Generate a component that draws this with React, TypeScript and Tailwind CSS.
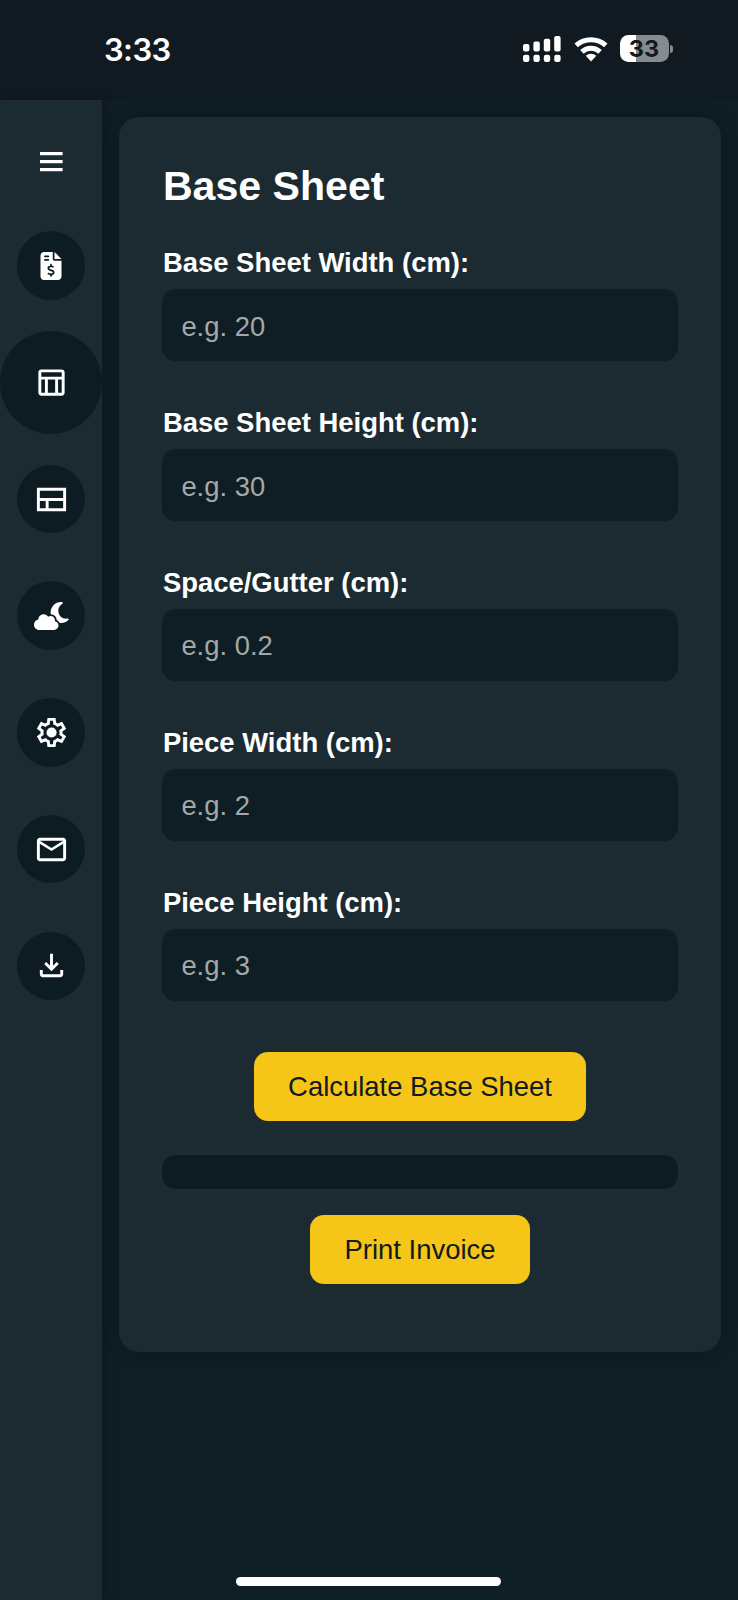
import React from "react";
import { FaCloudMoon, FaFileInvoiceDollar } from "react-icons/fa6";

const fields = [
  { label: "Base Sheet Width (cm):", hint: "e.g. 20" },
  { label: "Base Sheet Height (cm):", hint: "e.g. 30" },
  { label: "Space/Gutter (cm):", hint: "e.g. 0.2" },
  { label: "Piece Width (cm):", hint: "e.g. 2" },
  { label: "Piece Height (cm):", hint: "e.g. 3" },
];

function Symbol({ d }: { d: string }) {
  return (
    <svg className="size-[35px]" viewBox="0 -960 960 960" fill="currentColor">
      <path d={d} />
    </svg>
  );
}

const TABLE =
  "M760-120H200q-33 0-56.5-23.5T120-200v-560q0-33 23.5-56.5T200-840h560q33 0 56.5 23.5T840-760v560q0 33-23.5 56.5T760-120ZM200-640h560v-120H200v120Zm100 80H200v360h100v-360Zm360 0v360h100v-360H660Zm-80 0H380v360h200v-360Z";
const LAYOUT =
  "M80-160v-640h800v640H80Zm80-360h640v-200H160v200Zm0 280h160v-200H160v200Zm240 0h400v-200H400v200Z";
const SETTINGS =
  "m370-80-16-128q-13-5-24.5-12T307-235l-119 50L78-375l103-78q-1-7-1-13.5v-27q0-6.5 1-13.5L78-585l110-190 119 50q11-8 23-15t24-12l16-128h220l16 128q13 5 24.5 12t22.5 15l119-50 110 190-103 78q1 7 1 13.5v27q0 6.5-2 13.5l103 78-110 190-118-50q-11 8-23 15t-24 12L590-80H370Zm70-80h79l14-106q31-8 57.5-23.5T639-327l99 41 39-68-86-65q5-14 7-29.5t2-31.5q0-16-2-31.5t-7-29.5l86-65-39-68-99 42q-22-23-48.5-38.5T533-694l-13-106h-79l-14 106q-31 8-57.5 23.5T321-633l-99-41-39 68 86 64q-5 15-7 30t-2 32q0 16 2 31t7 30l-86 65 39 68 99-42q22 23 48.5 38.5T427-266l13 106Zm42-180q58 0 99-41t41-99q0-58-41-99t-99-41q-59 0-99.5 41T342-480q0 58 40.5 99t99.5 41Z";
const MAIL =
  "M160-160q-33 0-56.5-23.5T80-240v-480q0-33 23.5-56.5T160-800h640q33 0 56.5 23.5T880-720v480q0 33-23.5 56.5T800-160H160Zm320-280L160-640v400h640v-400L480-440Zm0-80 320-200H160l320 200Z";
const DOWNLOAD =
  "M480-320 280-520l56-58 104 104v-326h80v326l104-104 56 58-200 200ZM240-160q-33 0-56.5-23.5T160-240v-120h80v120h480v-120h80v120q0 33-23.5 56.5T720-160H240Z";

function NavButton({ label, children }: { label: string; children: React.ReactNode }) {
  return (
    <button
      aria-label={label}
      className="flex size-[68.6px] shrink-0 items-center justify-center rounded-full bg-[#0d1c22] text-white"
    >
      {children}
    </button>
  );
}

function StatusBar() {
  return (
    <header className="flex h-[100.4px] shrink-0 items-center justify-between bg-[#111a20] pr-[65px] pb-[3px] pl-[104px]">
      <span className="pt-[3px] font-[Inter,sans-serif] text-[31px] font-semibold tracking-[-0.6px] text-white">
        3:33
      </span>
      <div className="flex items-center">
        <svg className="mr-[13px] h-[26px] w-[38px]" viewBox="0 0 38 26" fill="#fff">
          <rect x="0" y="8" width="6.4" height="7.5" rx="2" />
          <rect x="10.4" y="5.5" width="6.4" height="10" rx="2" />
          <rect x="20.8" y="2.8" width="6.4" height="12.7" rx="2" />
          <rect x="31.2" y="0" width="6.4" height="15.5" rx="2" />
          <rect x="0" y="18.8" width="6.4" height="7.2" rx="2.2" />
          <rect x="10.4" y="18.8" width="6.4" height="7.2" rx="2.2" />
          <rect x="20.8" y="18.8" width="6.4" height="7.2" rx="2.2" />
          <rect x="31.2" y="18.8" width="6.4" height="7.2" rx="2.2" />
        </svg>
        <svg className="mr-[12px] h-[26px] w-[34px]" viewBox="0 0 34 26" fill="none" stroke="#fff">
          <path d="M2.2 9.4a22 22 0 0 1 29.6 0" strokeWidth="5" />
          <path d="M7.9 15.8a13.4 13.4 0 0 1 18.2 0" strokeWidth="5" />
          <path d="M17 25.4l-5.3-5.6a8 8 0 0 1 10.6 0z" fill="#fff" stroke="none" />
        </svg>
        <div className="flex h-[27px] w-[49px] items-center justify-center rounded-[8.5px] bg-[linear-gradient(90deg,#fff_16px,#888b8e_16px)] pt-px pr-px">
          <span className="font-[Inter,sans-serif] text-[23.5px] leading-none font-bold text-[#111a20]">
            33
          </span>
        </div>
        <div className="ml-px h-[8px] w-[3px] rounded-r-[3px] bg-[#888b8e]" />
      </div>
    </header>
  );
}

export default function App() {
  return (
    <div className="relative flex h-[1600px] w-[738px] flex-col overflow-hidden bg-[#0f1e24] font-['Liberation_Sans',sans-serif] text-white">
      <StatusBar />
      <div className="flex min-h-0 flex-1">
        <nav className="flex w-[102.4px] shrink-0 flex-col items-center bg-[#1c2b32] pr-[0.4px] shadow-[2px_0_10px_rgba(0,0,0,0.2)]">
          <button aria-label="Menu" className="mt-[51.6px] mb-[59.4px]">
            <svg className="h-[20px] w-[23px]" viewBox="0 0 23 20" fill="#fff">
              <rect width="22.6" height="3.2" />
              <rect y="8" width="22.6" height="3.2" />
              <rect y="16" width="22.6" height="3.2" />
            </svg>
          </button>
          <div className="flex flex-col items-center gap-[48.1px]">
            <NavButton label="Invoice">
              <FaFileInvoiceDollar className="size-[28px]" />
            </NavButton>
            <div className="-my-[17px] flex size-[102.6px] items-center justify-center rounded-full bg-[#0d1c22]">
              <Symbol d={TABLE} />
            </div>
            <NavButton label="Layout">
              <Symbol d={LAYOUT} />
            </NavButton>
            <NavButton label="Theme">
              <FaCloudMoon className="h-[28px] w-[35px]" />
            </NavButton>
            <NavButton label="Settings">
              <Symbol d={SETTINGS} />
            </NavButton>
            <NavButton label="Mail">
              <Symbol d={MAIL} />
            </NavButton>
            <NavButton label="Download">
              <Symbol d={DOWNLOAD} />
            </NavButton>
          </div>
        </nav>
        <main className="flex flex-1 flex-col pt-[17px] pr-[17.3px] pl-[17px]">
          <section className="flex h-[1235px] flex-col rounded-[20px] bg-[#1c2b32] px-[43px] pt-[44.6px] shadow-[0_0_17px_rgba(0,0,0,0.2)]">
            <h1 className="pl-[0.5px] text-[41.1px] leading-[48px] font-bold">Base Sheet</h1>
            <form className="mt-[33.4px] flex flex-col gap-[46px]">
              {fields.map((f) => (
                <label key={f.label} className="block h-[113.8px]">
                  <span className="block h-[46px] pt-[4px] pl-[0.5px] text-[27.45px] leading-[32px] font-bold whitespace-nowrap">
                    {f.label}
                  </span>
                  <input
                    placeholder={f.hint}
                    className="block h-[72px] w-full rounded-[14px] bg-[#0f1e24] px-[19px] pt-[3px] text-[27.4px] outline-none placeholder:text-[#a5a8aa]"
                  />
                </label>
              ))}
            </form>
            <button className="mt-[55.5px] h-[69px] shrink-0 self-center rounded-[14px] bg-[#f5c518] px-[34.4px] pt-px text-[27.45px] text-[#111a20]">
              Calculate Base Sheet
            </button>
            <div className="mt-[34px] h-[34px] shrink-0 rounded-[14px] bg-[#0d1c22]" />
            <button className="mt-[26px] h-[69px] shrink-0 self-center rounded-[14px] bg-[#f5c518] px-[34.4px] pt-px text-[27.45px] text-[#111a20]">
              Print Invoice
            </button>
          </section>
        </main>
      </div>
      <div className="absolute bottom-[14px] left-[236px] h-[9px] w-[265px] rounded-full bg-white" />
    </div>
  );
}
